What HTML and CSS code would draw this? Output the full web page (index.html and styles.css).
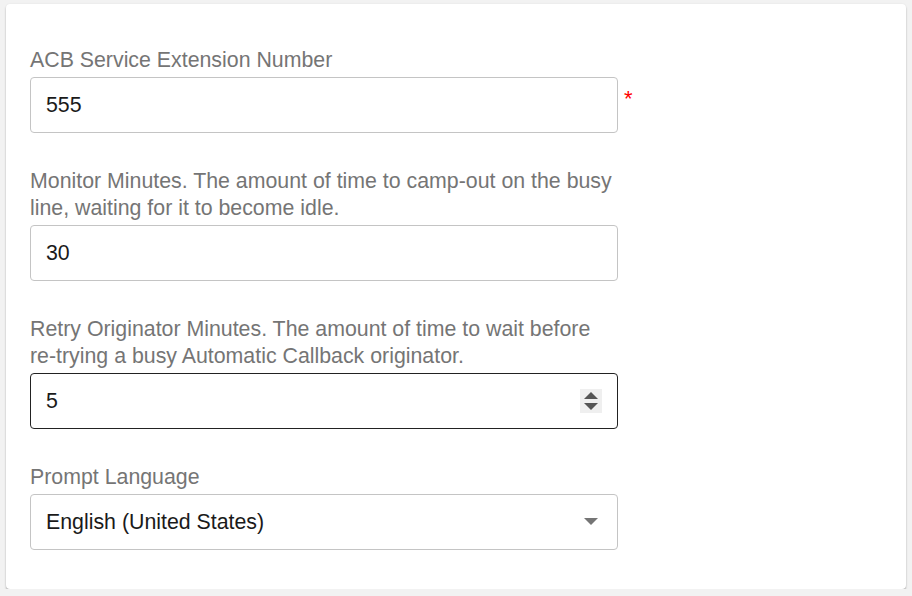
FILE: index.html
```html
<!DOCTYPE html>
<html>
<head>
<meta charset="utf-8">
<link rel="stylesheet" href="styles.css">
</head>
<body>
<div class="card">
  <div class="field">
    <div class="label">ACB Service Extension Number</div>
    <div class="row">
      <div class="input">555</div>
      <span class="req">*</span>
    </div>
  </div>
  <div class="field">
    <div class="label">Monitor Minutes. The amount of time to camp-out on the busy<br>line, waiting for it to become idle.</div>
    <div class="row">
      <div class="input">30</div>
    </div>
  </div>
  <div class="field">
    <div class="label">Retry Originator Minutes. The amount of time to wait before<br>re-trying a busy Automatic Callback originator.</div>
    <div class="row">
      <div class="input focused">
        <span>5</span>
        <span class="spin">
          <svg width="22" height="24" viewBox="0 0 22 24"><path d="M4 10 L11 3 L18 10 Z" fill="#555"/><path d="M4 14 L11 21 L18 14 Z" fill="#555"/></svg>
        </span>
      </div>
    </div>
  </div>
  <div class="field">
    <div class="label">Prompt Language</div>
    <div class="row">
      <div class="input select">
        <span>English (United States)</span>
        <svg class="caret" width="14" height="8" viewBox="0 0 14 8"><path d="M0 0 L14 0 L7 7 Z" fill="#757575"/></svg>
      </div>
    </div>
  </div>
</div>
</body>
</html>
```
FILE: styles.css
```css
html, body {
  margin: 0;
  padding: 0;
  background: #f2f2f2;
}
body {
  padding: 4px 6px 0 6px;
  font-family: "Liberation Sans", Arial, sans-serif;
}
.card {
  width: 900px;
  height: 585px;
  box-sizing: border-box;
  background: #fff;
  border-radius: 4px;
  box-shadow: 0 2px 2px rgba(0,0,0,0.25), 0 0 2px rgba(0,0,0,0.08);
  padding: 42px 24px 0 24px;
  display: flex;
  flex-direction: column;
  gap: 34px;
}
.label {
  color: #757575;
  font-size: 21.33px;
  line-height: 27px;
  padding-top: 1px;
  margin-bottom: 3px;
}
.row {
  display: flex;
  align-items: flex-start;
}
.input {
  width: 588px;
  height: 56px;
  box-sizing: border-box;
  border: 1px solid #c4c4c4;
  border-radius: 4px;
  padding: 0 15px;
  display: flex;
  align-items: center;
  justify-content: space-between;
  font-size: 21.33px;
  color: #1a1a1a;
}
.input.focused {
  border-color: #222;
}
.spin {
  width: 22px;
  height: 24px;
  background: #efefef;
  display: flex;
}
.req {
  color: #ff0000;
  font-size: 22px;
  margin-left: 6px;
  margin-top: 9px;
}
.caret {
  margin-right: 4px;
}
```
